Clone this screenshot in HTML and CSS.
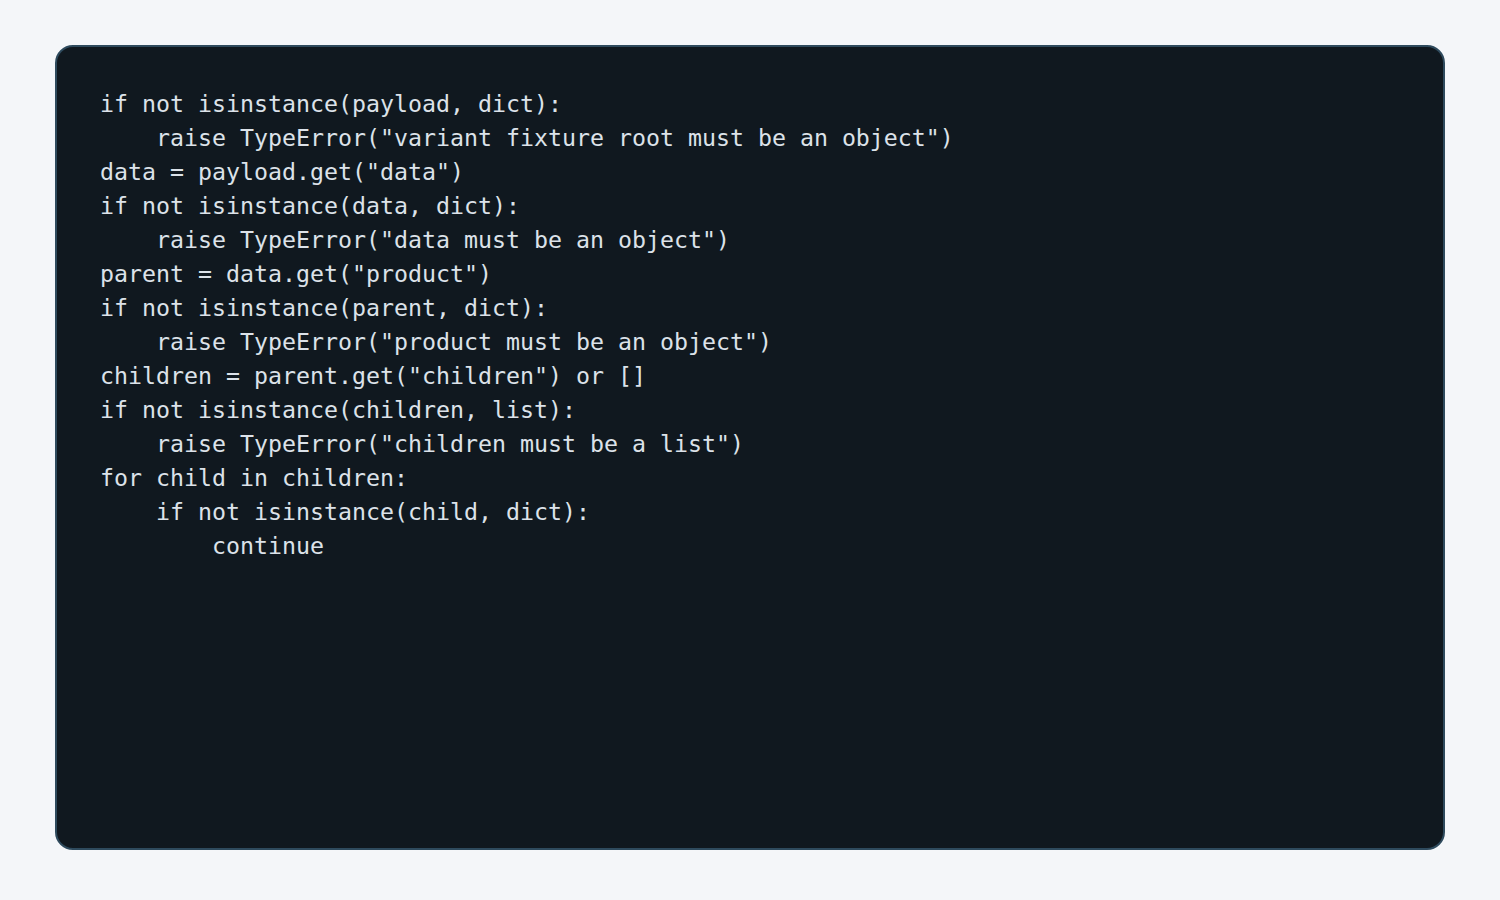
FILE: index.html
```html
<!DOCTYPE html>
<html>
<head>
<meta charset="utf-8">
<link rel="stylesheet" href="styles.css">
</head>
<body>
<main class="page">
<pre class="code">if not isinstance(payload, dict):
    raise TypeError("variant fixture root must be an object")
data = payload.get("data")
if not isinstance(data, dict):
    raise TypeError("data must be an object")
parent = data.get("product")
if not isinstance(parent, dict):
    raise TypeError("product must be an object")
children = parent.get("children") or []
if not isinstance(children, list):
    raise TypeError("children must be a list")
for child in children:
    if not isinstance(child, dict):
        continue</pre>
</main>
</body>
</html>
```
FILE: styles.css
```css
html, body {
  margin: 0;
  padding: 0;
  background: #f4f6f9;
}
.page {
  box-sizing: border-box;
  height: 900px;
  padding: 45px 55px 50px;
  display: flex;
}
.code {
  flex: 1;
  margin: 0;
  box-sizing: border-box;
  background: #10181f;
  border: 2px solid #2e4a5d;
  border-radius: 18px;
  padding: 40px 43px;
  font-family: "DejaVu Sans Mono", monospace;
  font-size: 23.25px;
  line-height: 34px;
  color: #dce2e9;
  white-space: pre;
  overflow: hidden;
}
```
